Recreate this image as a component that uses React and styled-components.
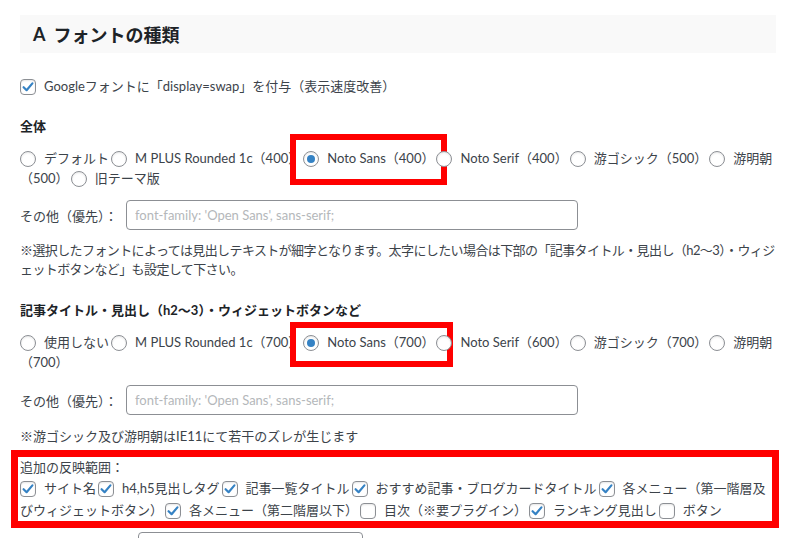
import styled, { createGlobalStyle } from "styled-components";

const GlobalStyle = createGlobalStyle`
  html, body {
    margin: 0;
    padding: 0;
    background: #fff;
  }
  body {
    font-family: Lato, "Noto Sans CJK JP", sans-serif;
    font-size: 13px;
    color: #3c434a;
    overflow: hidden;
  }
`;

const Page = styled.div`
  width: 756px;
  padding: 15px 0 0 20px;
`;

const SectionHeader = styled.h2`
  margin: 0;
  height: 38px;
  display: flex;
  align-items: center;
  gap: 8px;
  padding-left: 13px;
  background: #f9f9f9;
  font-size: 18px;
  font-weight: 700;
  color: #1d2327;
`;

const Heading = styled.h3`
  margin: ${({ $mt }) => $mt}px 0 0;
  font-size: 13px;
  line-height: 20px;
  font-weight: 700;
  color: #1d2327;
`;

const Line = styled.div`
  margin-top: ${({ $mt }) => $mt || 0}px;
  line-height: ${({ $lh }) => $lh || 20}px;
`;

const Choice = styled.label`
  position: relative;
  display: ${({ $mark }) => ($mark ? "inline-block" : "inline")};
  margin-right: ${({ $gap }) => $gap || 0}px;

  ${({ $mark }) =>
    $mark &&
    `
    &::after {
      content: "";
      position: absolute;
      left: ${$mark.l}px;
      right: ${$mark.r}px;
      top: ${$mark.t}px;
      bottom: ${$mark.b}px;
      border: 6px solid #ff0000;
      pointer-events: none;
    }
  `}
`;

const Box = styled.span`
  position: relative;
  display: inline-block;
  box-sizing: border-box;
  width: 16px;
  height: 16px;
  margin-right: 8px;
  vertical-align: -3.5px;
  border: 1px solid #8c8f94;
  border-radius: ${({ $round }) => ($round ? "50%" : "4px")};
  background: #fff;
  box-shadow: inset 0 1px 2px rgba(0, 0, 0, 0.1);

  ${({ $round, $on }) =>
    $round &&
    $on &&
    `
    &::before {
      content: "";
      position: absolute;
      left: 3px;
      top: 3px;
      width: 8px;
      height: 8px;
      border-radius: 50%;
      background: #3582c4;
    }
  `}

  svg {
    position: absolute;
    left: 0;
    top: 0;
  }
`;

const Field = styled.div`
  display: flex;
  align-items: center;
  margin-top: ${({ $mt }) => $mt}px;
`;

const FieldLabel = styled.span`
  width: ${({ $w }) => $w}px;
  flex: none;
  white-space: nowrap;
`;

const TextInput = styled.input`
  box-sizing: border-box;
  width: ${({ $w }) => $w}px;
  height: 30px;
  margin: 0;
  padding: 0 8px;
  border: 1px solid #8c8f94;
  border-radius: 4px;
  background: #fff;
  font: inherit;
  color: #2c3338;
  outline: none;

  &::placeholder {
    color: #b4b7ba;
  }
`;

const Note = styled.p`
  margin: ${({ $mt }) => $mt}px 0 0;
  line-height: 19px;
  letter-spacing: ${({ $tight }) => ($tight ? "-0.6px" : "0")};
`;

const Marked = styled.div`
  margin: 11px 0 0 -2px;
  padding: 0 2px;
  width: 750px;
  outline: 7px solid #ff0000;
  line-height: 22px;
`;

const Check = ({ on }) => (
  <Box>
    {on && (
      <svg width="14" height="14" viewBox="0 0 14 14">
        <path
          d="M2.6 7.2 L5.6 10.2 L11.4 3.4"
          fill="none"
          stroke="#3582c4"
          strokeWidth="2.2"
          strokeLinecap="round"
          strokeLinejoin="round"
        />
      </svg>
    )}
  </Box>
);

const Radio = ({ on }) => <Box $round $on={on} />;

const bodyFonts = [
  { label: "デフォルト" },
  { label: "M PLUS Rounded 1c（400）" },
  { label: "Noto Sans（400）", on: true, mark: { l: -13, r: -13, t: -14, b: -17 } },
  { label: "Noto Serif（400）" },
  { label: "游ゴシック（500）" },
  { label: "游明朝（500）" },
  { label: "旧テーマ版" },
];

const titleFonts = [
  { label: "使用しない" },
  { label: "M PLUS Rounded 1c（700）" },
  { label: "Noto Sans（700）", on: true, mark: { l: -13, r: -19, t: -10, b: -15 } },
  { label: "Noto Serif（600）" },
  { label: "游ゴシック（700）" },
  { label: "游明朝（700）" },
];

const targets = [
  { label: "サイト名", on: true },
  { label: "h4,h5見出しタグ", on: true },
  { label: "記事一覧タイトル", on: true },
  { label: "おすすめ記事・ブログカードタイトル", on: true },
  { label: "各メニュー（第一階層及びウィジェットボタン）", on: true },
  { label: "各メニュー（第二階層以下）", on: true },
  { label: "目次（※要プラグイン）", on: false },
  { label: "ランキング見出し", on: true },
  { label: "ボタン", on: false },
];

const RadioGroup = ({ items, mt }) => (
  <Line $mt={mt}>
    {items.map((item) => (
      <Choice key={item.label} $mark={item.mark} $gap={2}>
        <Radio on={item.on} />
        {item.label}
      </Choice>
    ))}
  </Line>
);

const App = () => (
  <>
    <GlobalStyle />
    <Page>
      <SectionHeader>
        <span>A</span>
        <span>フォントの種類</span>
      </SectionHeader>

      <Line $mt={23}>
        <Choice>
          <Check on />
          Googleフォントに「display=swap」を付与（表示速度改善）
        </Choice>
      </Line>

      <Heading $mt={20}>全体</Heading>
      <RadioGroup items={bodyFonts} mt={12} />
      <Field $mt={12}>
        <FieldLabel $w={106}>その他（優先）：</FieldLabel>
        <TextInput $w={452} placeholder="font-family: 'Open Sans', sans-serif;" />
      </Field>
      <Note $mt={11} $tight>
        ※選択したフォントによっては見出しテキストが細字となります。太字にしたい場合は下部の「記事タイトル・見出し（h2〜3）・ウィジェットボタンなど」も設定して下さい。
      </Note>

      <Heading $mt={21}>記事タイトル・見出し（h2〜3）・ウィジェットボタンなど</Heading>
      <RadioGroup items={titleFonts} mt={12} />
      <Field $mt={13}>
        <FieldLabel $w={106}>その他（優先）：</FieldLabel>
        <TextInput $w={452} placeholder="font-family: 'Open Sans', sans-serif;" />
      </Field>
      <Note $mt={12}>※游ゴシック及び游明朝はIE11にて若干のズレが生じます</Note>

      <Marked>
        <Line>追加の反映範囲：</Line>
        {targets.map((item) => (
          <Choice key={item.label} $gap={2}>
            <Check on={item.on} />
            {item.label}
          </Choice>
        ))}
      </Marked>

      <Field $mt={11}>
        <FieldLabel $w={118}>フォントサイズ：</FieldLabel>
        <TextInput $w={225} />
      </Field>
    </Page>
  </>
);

export default App;
